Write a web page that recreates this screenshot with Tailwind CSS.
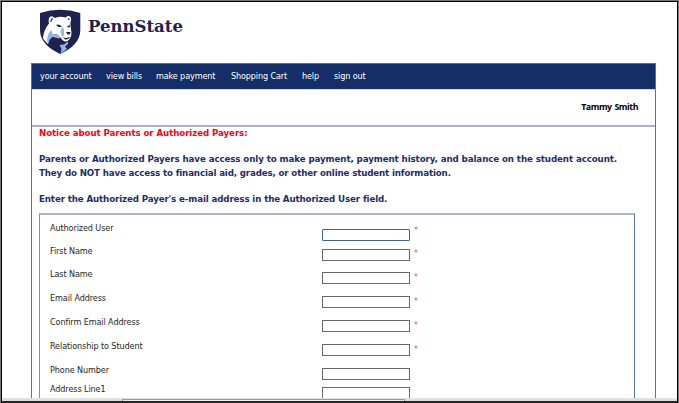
<!DOCTYPE html>
<html lang="en">
<head>
<meta charset="utf-8">
<title>Penn State - Authorized Payers</title>
<script src="https://cdn.jsdelivr.net/npm/@tailwindcss/browser@4"></script>
</head>
<body class="bg-white">
<div class="w-[679px] h-[403px] overflow-hidden flex flex-col border border-b-0 border-[#777] bg-white">
 <div class="h-[402px] flex flex-col border border-b-0 border-black">
  <header class="h-[61px] shrink-0 flex pl-[38px] pt-[7px]">
    <svg class="w-[41px] h-[46px]" viewBox="0 0 41 46" role="img" aria-label="Penn State shield">
      <path d="M0 4Q10 .8 20.200 .8Q30.500 .8 40.300 4V21C40.300 32 32 39.500 20.200 45C8.500 39.500 0 32 0 21Z" fill="#1f2150"/>
      <path d="M3 29C3.500 23 6 18 9 14.500C8 10 9.500 6.500 12.500 7.500L15 9C18.500 7.500 22 7.500 26 8.500C27.500 6.500 30.500 6.500 31 9.500C31.300 12 30 13.500 30.500 16L31.500 24C31.500 27.500 30 30.500 27.500 32C25 33 22.500 32 21 29L16 25L10 27L8 35C5.500 33 4 31 3 29Z" fill="#fff"/>
      <path d="M8 35C6 29 8 24 11.500 21L12.500 25L18 25.500L21 28.500L19 29.500L13 28C10 29 9 32 8 35Z" fill="#93b5e4"/>
      <path d="M19.500 36L24 35.500L28 32.500V35L25 37.500L27 40L20.500 44.500L21.500 40Z" fill="#93b5e4"/>
      <path d="M11 13Q11 9.500 13 10M29 11Q29 9.500 28 10" fill="none" stroke="#1f2150" stroke-width="1.200"/>
      <path d="M16 16Q19 14.500 22 18L18.500 18ZM26.500 18L30.500 15.500L29.500 18.500ZM26 23H30.800L29.500 25.500H27.500ZM22.500 28Q26 30 30.500 27.800Q28 31 25 30.500Z" fill="#1f2150"/>
      <path d="M22 18L24 20.500L24 26L22 28L20.500 23Z" fill="#93b5e4"/>
    </svg>
    <svg class="w-[110px] h-[34px] ml-[6px]" viewBox="0 0 110 34"><text x="1" y="22.500" textLength="95" lengthAdjust="spacingAndGlyphs" font-family="DejaVu Serif, serif" font-weight="700" font-size="17.500" fill="#1f2150">PennState</text></svg>
  </header>
  <div class="mx-[29px] w-[625px] h-[335px] shrink-0 overflow-hidden flex flex-col border border-b-0 border-[#5470a5]">
    <nav class="h-[25px] shrink-0 bg-[#162e67] text-white flex items-center pl-2 gap-[15px] font-['DejaVu_Sans_Condensed','DejaVu_Sans',sans-serif] [font-stretch:condensed] text-[9px] tracking-[-.13px] whitespace-nowrap">
      <span class="w-[51px]">your account</span><span class="w-[35px]">view bills</span><span class="w-[60px]">make payment</span><span class="w-[56px]">Shopping Cart</span><span class="w-[17px]">help</span><span>sign out</span>
    </nav>
    <div class="h-[38px] shrink-0 border-b-2 border-[#a5b1ce] border-t border-t-[#d6dae8] flex items-center justify-end pr-[17px] font-['Open_Sans',sans-serif] font-bold text-[8.8px] tracking-[-.45px] [word-spacing:1px] text-black"><span>Tammy Smith</span></div>
    <main class="px-[7px] font-['DejaVu_Sans',sans-serif] font-bold text-[8.7px] leading-[13.300px] text-[#1c2d6b] whitespace-nowrap">
      <p class="text-[#fc0018] tracking-[-.1px]">Notice about Parents or Authorized Payers:</p>
      <p class="mt-[13px] tracking-[-.1px]">Parents or Authorized Payers have access only to make payment, payment history, and balance on the student account.</p>
      <p class="tracking-[-.15px]">They do NOT have access to financial aid, grades, or other online student information.</p>
      <p class="mt-[13px] tracking-[-.13px]">Enter the Authorized Payer's e-mail address in the Authorized User field.</p>
      <form class="mt-[7px] w-[596px] h-[190px] border border-[#5470a5] border-t-2 border-t-[#aab5cf] border-l-[#7a8fbb] pt-[7px] pl-[10px] text-[9px] tracking-[-.1px] text-[#262626] font-normal font-['DejaVu_Sans_Condensed','DejaVu_Sans',sans-serif] [font-stretch:condensed]">
        <div class="flex h-[23px]"><label class="w-[272px]">Authorized User</label><input class="mt-[7px] w-[88px] h-[12px] border border-[#3d5fae] rounded-[1px]"><span class="ml-1 mt-[2px] text-[#f44]">*</span></div>
        <div class="flex h-[23px]"><label class="w-[272px]">First Name</label><input class="mt-[4px] w-[88px] h-[12px] border border-[#686868]"><span class="ml-1 mt-[2px] text-[#f44]">*</span></div>
        <div class="flex h-[24px]"><label class="w-[272px]">Last Name</label><input class="mt-[4px] w-[88px] h-[12px] border border-[#686868]"><span class="ml-1 mt-[3px] text-[#f44]">*</span></div>
        <div class="flex h-[24px]"><label class="w-[272px]">Email Address</label><input class="mt-[4px] w-[88px] h-[12px] border border-[#686868]"><span class="ml-1 mt-[3px] text-[#f44]">*</span></div>
        <div class="flex h-[24px]"><label class="w-[272px]">Confirm Email Address</label><input class="mt-[4px] w-[88px] h-[12px] border border-[#686868]"><span class="ml-1 mt-[3px] text-[#f44]">*</span></div>
        <div class="flex h-[24px]"><label class="w-[272px]">Relationship to Student</label><input class="mt-[4px] w-[88px] h-[12px] border border-[#686868]"><span class="ml-1 mt-[3px] text-[#f44]">*</span></div>
        <div class="flex h-[19px]"><label class="w-[272px]">Phone Number</label><input class="mt-[4px] w-[88px] h-[12px] border border-[#686868]"></div>
        <div class="flex h-[24px]"><label class="w-[272px]">Address Line1</label><input class="mt-[4px] w-[88px] h-[14px] border border-[#686868]"></div>
      </form>
    </main>
  </div>
  <div class="h-[3px] shrink-0 bg-[#e0e0e0] pt-px pl-[120px]"><div class="w-[283px] h-[2px] border border-b-0 border-[#999] bg-[#eee]"></div></div>
  <div class="h-[2px] shrink-0 bg-[#252525]"></div>
 </div>
</div>
</body>
</html>
